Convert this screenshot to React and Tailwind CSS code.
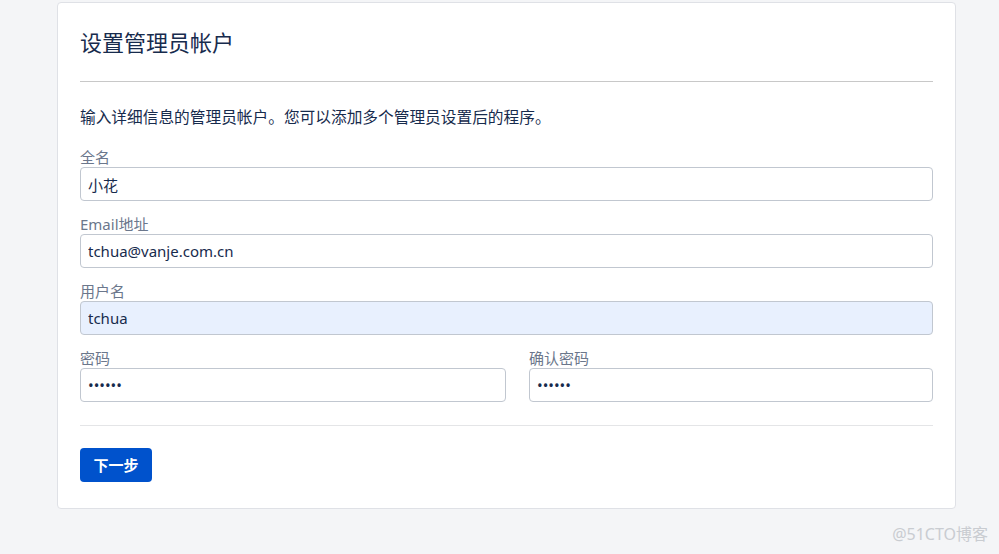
import React from 'react';

const font = { fontFamily: '"Noto Sans", "Noto Sans CJK SC", sans-serif' };

function Field({ label, value, type = 'text', filled = false }) {
  return (
    <div className="flex flex-col">
      <label className="text-[15px] leading-[20px] text-[#6b778c]">{label}</label>
      <input
        type={type}
        readOnly
        value={value}
        className={`h-[34px] w-full rounded-[4px] border border-[#c1c7d0] px-[7px] text-[15px] text-[#172b4d] outline-none ${
          filled ? 'bg-[#e8f0fe]' : 'bg-white'
        }`}
        style={font}
      />
    </div>
  );
}

export default function App() {
  return (
    <div className="relative min-h-[554px] bg-[#f4f5f7]" style={font}>
      <div className="pl-[57px] pr-[43px] pt-[2px]">
        <div className="rounded-[4px] border border-[#dfe1e6] bg-white px-[22px] pt-[26px] pb-[26px]">
          <h1 className="text-[22px] leading-[26px] text-[#172b4d]">设置管理员帐户</h1>
          <div className="mt-[26px] h-px bg-[#c8c8c8]" />
          <p className="mt-[25px] text-[15.7px] leading-[20px] text-[#172b4d]">
            输入详细信息的管理员帐户。您可以添加多个管理员设置后的程序。
          </p>
          <div className="mt-[20px] flex flex-col gap-[13px]">
            <Field label="全名" value="小花" />
            <Field label="Email地址" value="tchua@vanje.com.cn" />
            <Field label="用户名" value="tchua" filled />
            <div className="grid grid-cols-[426px_1fr] gap-[23px]">
              <Field label="密码" value="123456" type="password" />
              <Field label="确认密码" value="123456" type="password" />
            </div>
          </div>
          <div className="mt-[23px] h-px bg-[#e4e5e7]" />
          <button
            type="button"
            className="mt-[22px] h-[34px] w-[72px] rounded-[4px] bg-[#0052cc] text-[15px] font-bold text-white"
          >
            下一步
          </button>
        </div>
      </div>
      <div className="absolute right-[11px] bottom-[8px] text-[16px] text-[#c9ccd1]">@51CTO博客</div>
    </div>
  );
}
